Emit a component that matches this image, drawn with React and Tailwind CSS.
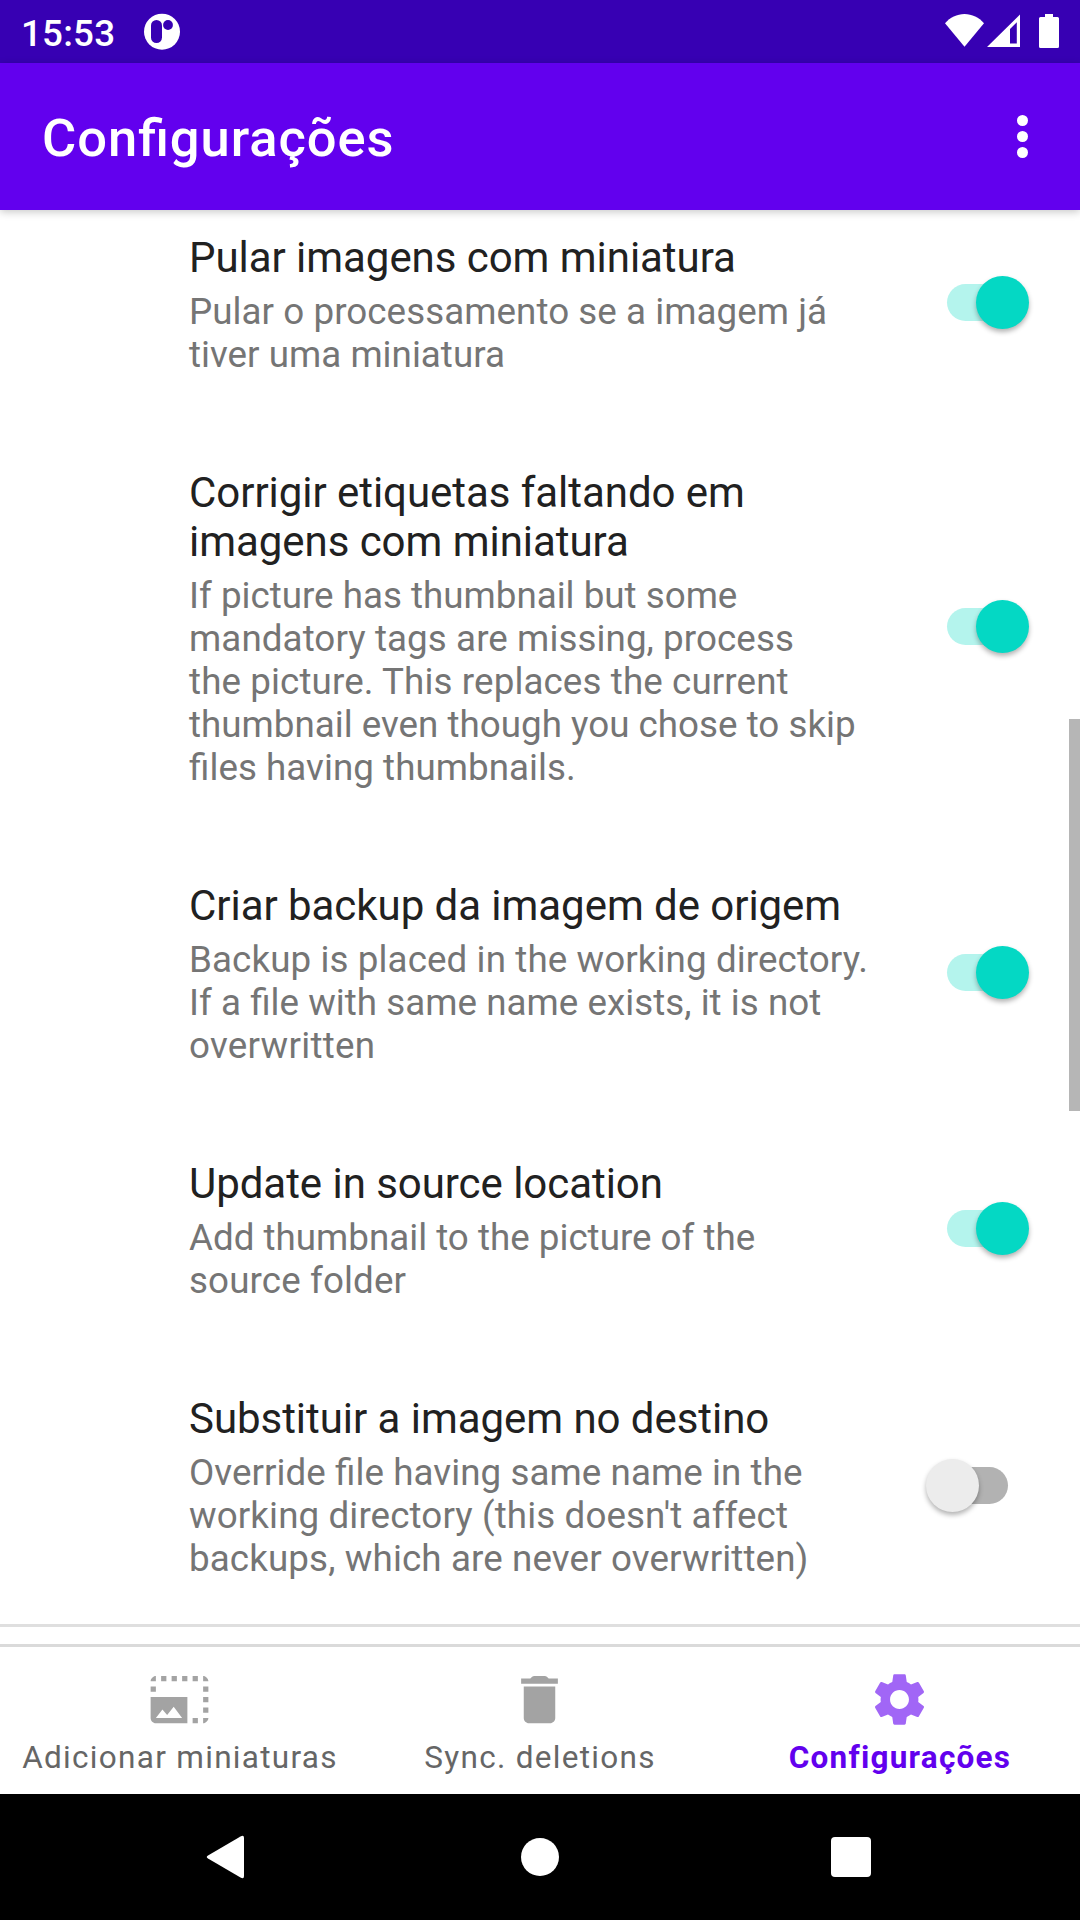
const SETTINGS = [
  {
    title: ["Pular imagens com miniatura"],
    summary: [
      ["Pular o processamento se a imagem já", "tracking-[0.055px]"],
      ["tiver uma miniatura", "tracking-[0.02px]"],
    ],
    on: true,
  },
  {
    title: ["Corrigir etiquetas faltando em", "imagens com miniatura"],
    summary: [
      ["If picture has thumbnail but some", "tracking-normal"],
      ["mandatory tags are missing, process", "tracking-[0.08px]"],
      ["the picture. This replaces the current", "tracking-[0.11px]"],
      ["thumbnail even though you chose to skip", "tracking-[0.01px]"],
      ["files having thumbnails.", "tracking-[0.04px]"],
    ],
    on: true,
  },
  {
    title: ["Criar backup da imagem de origem"],
    summary: [
      ["Backup is placed in the working directory.", "tracking-[0.1px]"],
      ["If a file with same name exists, it is not", "tracking-[0.03px]"],
      ["overwritten", "tracking-[0.28px]"],
    ],
    on: true,
  },
  {
    title: ["Update in source location"],
    summary: [
      ["Add thumbnail to the picture of the", "tracking-normal"],
      ["source folder", "tracking-[0.13px]"],
    ],
    on: true,
  },
  {
    title: ["Substituir a imagem no destino"],
    summary: [
      ["Override file having same name in the", "tracking-[0.065px]"],
      ["working directory (this doesn't affect", "tracking-[0.11px]"],
      ["backups, which are never overwritten)", "tracking-[0.12px]"],
    ],
    on: false,
  },
];

function StatusBar() {
  return (
    <div className="flex h-[63px] items-start justify-between bg-[#3700b3] text-white">
      <div className="flex items-start">
        <span className="ml-[21px] mt-[12px] w-[123px] text-[36.75px] font-medium leading-[43px] tracking-[0.2px]">15:53</span>
        <svg className="mt-[13px]" width="37" height="37" viewBox="0 0 37 37">
          <circle cx="18" cy="18.7" r="18" fill="#fff" />
          <rect x="7" y="7" width="11" height="23" rx="5.5" fill="#3700b3" />
          <circle cx="24" cy="12" r="4.9" fill="#3700b3" />
        </svg>
      </div>
      <svg width="140" height="63" viewBox="940 0 140 63" fill="#fff">
        <path d="M945 23.2C950 17.5 957 14 964.5 14S979 17.500 984 23.200L964.500 46.800Z" />
        <path fillRule="evenodd" d="M987 47L1020 14.500V47ZM1010 29V43.500H1016.800V22.200Z" />
        <path d="M1045 14H1053V17H1057.500Q1059 17 1059 18.500V46.500Q1059 48 1057.500 48H1040.500Q1039 48 1039 46.500V18.500Q1039 17 1040.500 17H1045Z" />
      </svg>
    </div>
  );
}

function AppBar() {
  return (
    <header className="relative z-10 flex h-[147px] items-center justify-between bg-[#6200ee] pl-[42px] pr-[52px] text-white shadow-[0_2px_8px_rgba(0,0,0,0.22)]">
      <h1 className="mt-[2px] text-[52.5px] font-medium leading-[62px] tracking-[0.95px]">Configurações</h1>
      <div className="flex flex-col gap-[5px]">
        <span className="size-[11px] rounded-full bg-white" />
        <span className="size-[11px] rounded-full bg-white" />
        <span className="size-[11px] rounded-full bg-white" />
      </div>
    </header>
  );
}

function Switch({ on }) {
  return (
    <div className={on ? "relative mr-[51px] flex h-[53px] w-[82px] items-center" : "relative mr-[72px] flex h-[53px] w-[82px] items-center justify-end"}>
      <span className={on ? "h-[37px] w-[62px] rounded-full bg-[#b4f4ed]" : "h-[37px] w-[62px] rounded-full bg-[#b2b2b2]"} />
      <span
        className={
          on
            ? "absolute right-0 top-0 size-[53px] rounded-full bg-[#04d8c4] shadow-[0_3px_5px_rgba(0,0,0,0.3)]"
            : "absolute left-0 top-0 size-[53px] rounded-full bg-[#ececec] shadow-[0_3px_5px_rgba(0,0,0,0.3)]"
        }
      />
    </div>
  );
}

function Setting({ title, summary, on }) {
  return (
    <li className="flex items-center justify-between pl-[189px]">
      <div className="whitespace-nowrap pb-[44px] pt-[48px]">
        <h2 className="text-[42px] leading-[49px] tracking-[-0.045px] text-[#212121]">
          {title.map((line) => (
            <span className="block" key={line}>{line}</span>
          ))}
        </h2>
        <p className="mt-[8px] text-[36.75px] leading-[43px] text-[#757575]">
          {summary.map(([line, tracking]) => (
            <span className={`block ${tracking}`} key={line}>{line}</span>
          ))}
        </p>
      </div>
      <Switch on={on} />
    </li>
  );
}

const NAV = [
  {
    label: "Adicionar miniaturas",
    path: "M21 15h2v2h-2v-2zm0-4h2v2h-2v-2zm2 8h-2v2c1 0 2-1 2-2zM13 3h2v2h-2V3zm8 4h2v2h-2V7zm0-4v2h2c0-1-1-2-2-2zM1 7h2v2H1V7zm16-4h2v2h-2V3zm0 16h2v2h-2v-2zM3 3C2 3 1 4 1 5h2V3zm6 0h2v2H9V3zM5 3h2v2H5V3zm-4 8v8c0 1.1.9 2 2 2h12V11H1zm2 8l2.500-3.210 1.790 2.150 2.500-3.220L13 19H3z",
  },
  {
    label: "Sync. deletions",
    path: "M6 19c0 1.100.9 2 2 2h8c1.100 0 2-.9 2-2V7H6v12zM19 4h-3.500l-.7-.7Q14.500 3 14 3h-4q-.5 0-.8.300L8.500 4H5v2h14V4z",
  },
  {
    label: "Configurações",
    path: "M19.14 12.94c.04-.3.06-.61.06-.94 0-.32-.02-.64-.07-.94l2.030-1.580c.18-.14.23-.41.12-.61l-1.920-3.320c-.12-.22-.37-.29-.59-.22l-2.390.96c-.5-.38-1.030-.7-1.620-.94l-.36-2.540c-.04-.24-.24-.41-.48-.41h-3.840c-.24 0-.43.17-.47.41l-.36 2.540c-.59.24-1.130.57-1.620.94l-2.390-.96c-.22-.08-.47 0-.59.22L2.740 8.870c-.12.21-.08.47.12.61l2.030 1.580c-.05.3-.09.63-.09.94s.02.64.07.94l-2.030 1.580c-.18.14-.23.41-.12.61l1.920 3.320c.12.22.37.29.59.22l2.390-.96c.5.38 1.030.7 1.620.94l.36 2.540c.05.24.24.41.48.41h3.840c.24 0 .44-.17.47-.41l.36-2.540c.59-.24 1.130-.56 1.620-.94l2.390.96c.22.08.47 0 .59-.22l1.920-3.320c.12-.22.07-.47-.12-.61l-2.010-1.580zM12 15.600c-1.980 0-3.600-1.620-3.600-3.600s1.620-3.600 3.600-3.600 3.600 1.620 3.600 3.600-1.620 3.600-3.600 3.600z",
    active: true,
  },
];

function BottomNav() {
  return (
    <nav className="grid h-[150px] shrink-0 grid-cols-3 border-t-[3px] border-[#dadada] bg-white">
      {NAV.map(({ label, path, active }) => (
        <div className="flex flex-col items-center pt-[21px]" key={label}>
          <svg width="63" height="63" viewBox="0 0 24 24" className={active ? "mr-px text-[#a166f6]" : "mr-px text-[#a3a3a3]"}>
            <path d={path} fill="currentColor" />
          </svg>
          <span
            className={
              active
                ? "mt-[8px] whitespace-nowrap text-[31.5px] font-bold leading-[37px] tracking-[1.22px] text-[#6200ee] [font-feature-settings:normal]"
                : "mt-[8px] whitespace-nowrap text-[31.5px] leading-[37px] tracking-[1.3px] text-[#666666] [font-feature-settings:normal]"
            }
          >
            {label}
          </span>
        </div>
      ))}
    </nav>
  );
}

function SystemBar() {
  return (
    <div className="flex h-[126px] shrink-0 items-center justify-between bg-black pl-[206px] pr-[209px]">
      <svg width="38" height="44" viewBox="0 0 38 44">
        <path d="M2 20.500L34.500 1.500Q38 -0.500 38 3V41Q38 44.500 34.500 42.500L2 23.500Q-.5 22 2 20.500Z" fill="#fff" />
      </svg>
      <span className="ml-[4px] size-[38px] rounded-full bg-white" />
      <span className="size-[40px] rounded-[4px] bg-white" />
    </div>
  );
}

export default function App() {
  return (
    <div className="flex h-[1920px] w-[1080px] flex-col overflow-hidden bg-white font-['Roboto',sans-serif] [font-feature-settings:'liga'_1]">
      <StatusBar />
      <AppBar />
      <main className="relative h-[1434px] overflow-hidden bg-white">
        <ul className="-mt-[25px] border-b-[3px] border-[#dfdfdf]">
          {SETTINGS.map((s) => (
            <Setting key={s.title[0]} {...s} />
          ))}
        </ul>
        <span className="absolute right-0 top-[509px] h-[392px] w-[11px] bg-[#b6b6b6]" />
      </main>
      <BottomNav />
      <SystemBar />
    </div>
  );
}
